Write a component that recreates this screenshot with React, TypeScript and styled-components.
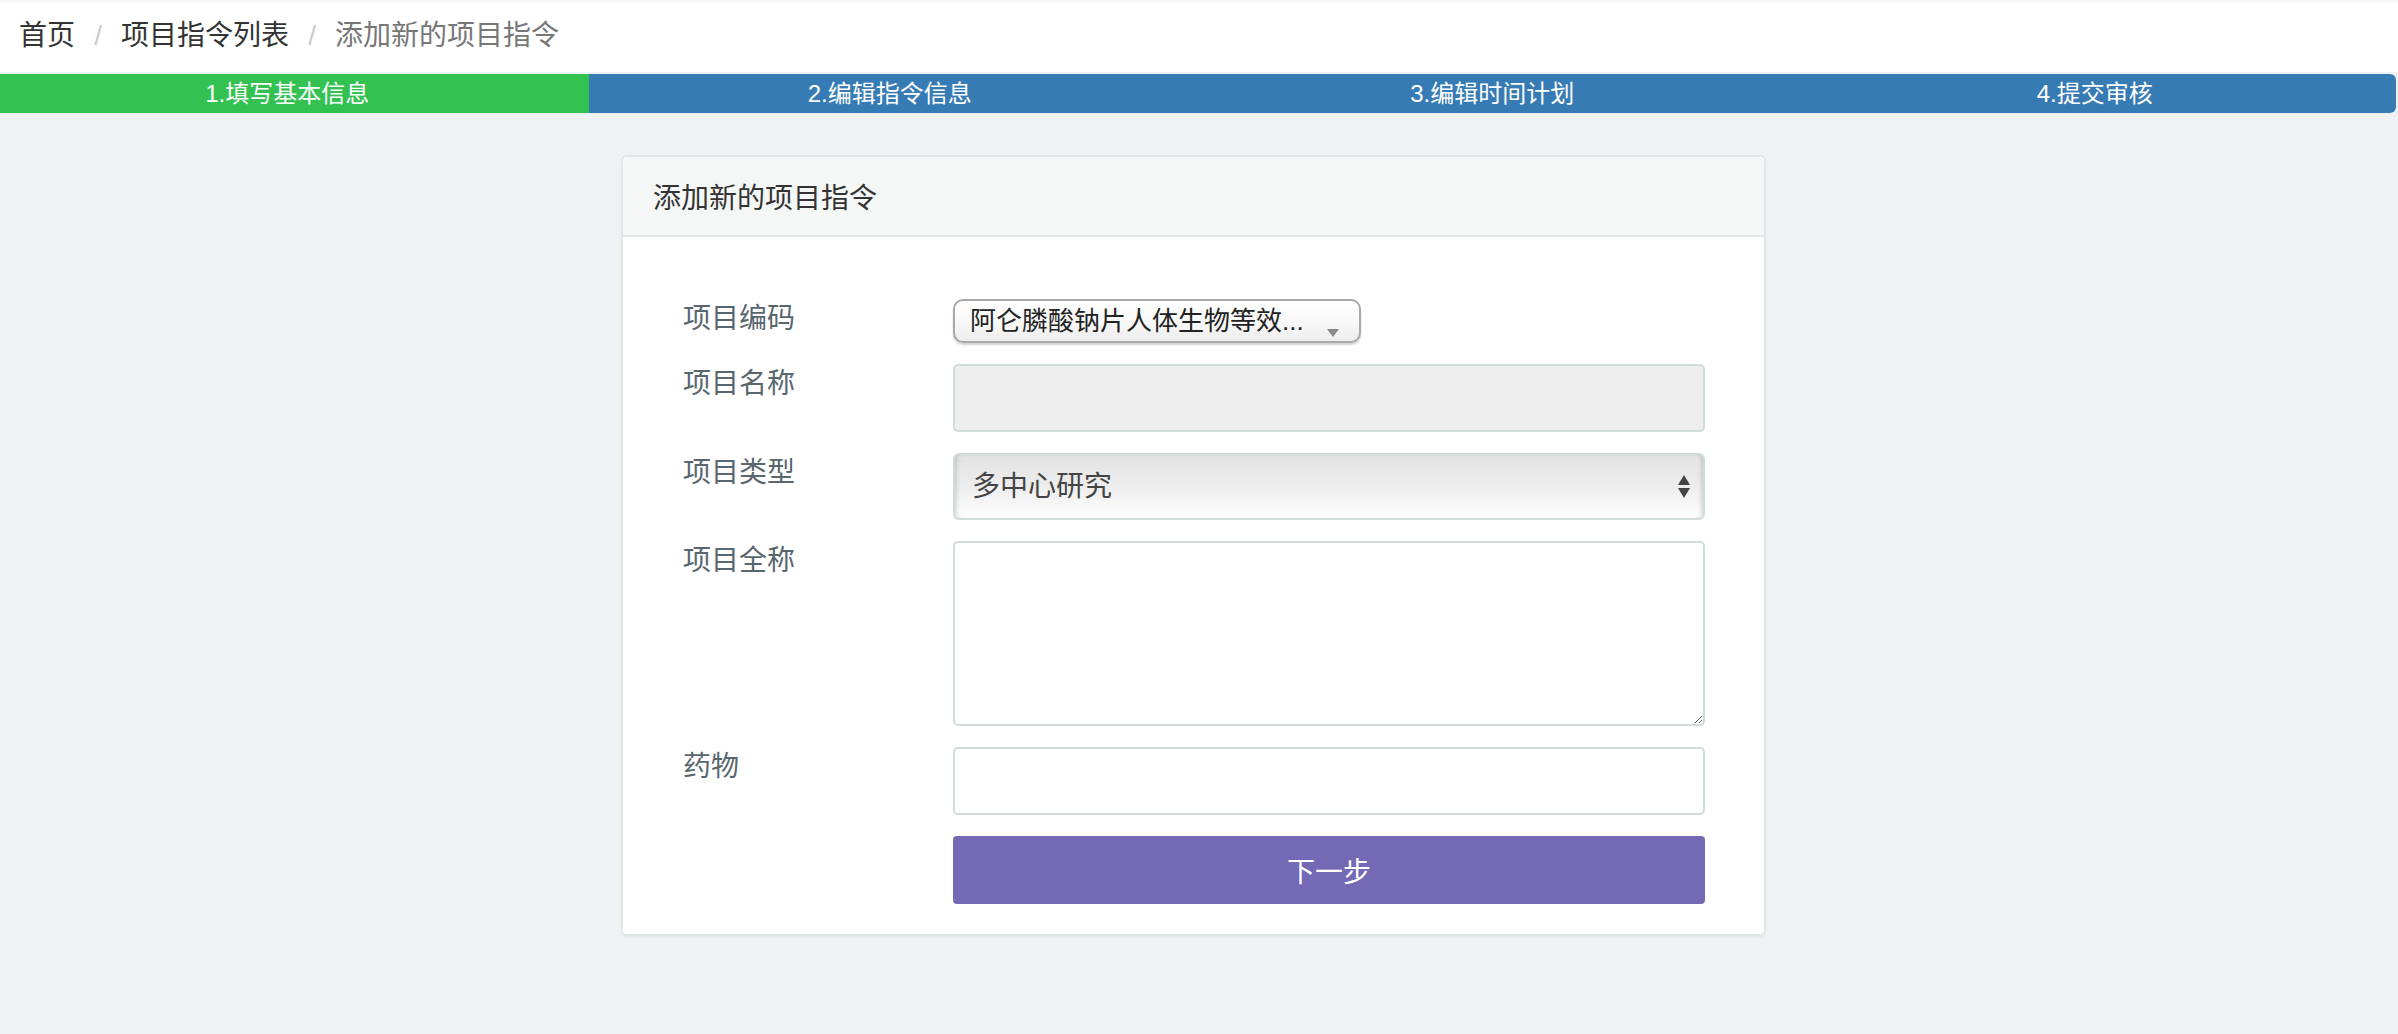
import { createGlobalStyle } from 'styled-components'
import styled from 'styled-components'

const GlobalStyle = createGlobalStyle`
  html, body {
    margin: 0;
    padding: 0;
    background: #eef2f3;
    font-family: "Liberation Sans", "Noto Sans CJK SC", sans-serif;
  }
  * {
    box-sizing: border-box;
  }
`

const Page = styled.div`
  width: 2398px;
  min-height: 1034px;
  background: #eef2f3;
  overflow: hidden;
`

const Breadcrumb = styled.nav`
  height: 72px;
  background: #fff;
  display: flex;
  align-items: center;
  padding-left: 19px;
  font-size: 28px;
  line-height: 40px;
  box-shadow: inset 0 5px 4px -3px rgba(0, 0, 0, 0.06);
`

const Crumb = styled.span<{ active?: boolean }>`
  color: ${props => props.active ? '#777' : '#333'};
`

const Sep = styled.span`
  display: inline-block;
  width: 46px;
  text-align: center;
  color: #ccc;
`

// the bar sits a little left of the page edge, as in the original
const StepBar = styled.div`
  margin: 2px 0 0 -14px;
  width: 2410px;
  height: 39px;
  display: grid;
  grid-template-columns: repeat(4, 1fr);
  border-radius: 0 6px 6px 0;
  overflow: hidden;
`

const Step = styled.div<{ done?: boolean }>`
  background: ${props => props.done ? '#33c152' : '#377bb5'};
  color: #fff;
  font-size: 24px;
  line-height: 39px;
  text-align: center;
`

const Panel = styled.section`
  margin: 42px 0 0 621px;
  width: 1145px;
  background: #fff;
  border: 2px solid #e1e7e7;
  border-radius: 6px;
  box-shadow: 0 2px 2px rgba(0, 0, 0, 0.04);
`

const PanelHeader = styled.div`
  height: 80px;
  display: flex;
  align-items: center;
  padding: 0 30px;
  background: #f5f7f7;
  border-bottom: 2px solid #e3e8e8;
  border-radius: 6px 6px 0 0;
  font-size: 28px;
  color: #333;
`

const PanelBody = styled.div`
  padding: 62px 59px 30px 60px;
  display: flex;
  flex-direction: column;
  gap: 21px;
`

const Row = styled.div`
  display: grid;
  grid-template-columns: 270px 1fr;
  align-items: start;
`

const Label = styled.label`
  font-size: 28px;
  line-height: 40px;
  color: #58666e;
`

const MiniSelect = styled.div`
  position: relative;
  width: 408px;
  height: 44px;
  border: 2px solid #a9a9a9;
  border-radius: 10px;
  background: linear-gradient(to bottom, #ffffff 0%, #f7f7f7 60%, #ececec 100%);
  box-shadow: 0 2px 2px rgba(0, 0, 0, 0.18);
  font-size: 26px;
  line-height: 40px;
  color: #222;
  padding-left: 15px;
  white-space: nowrap;
`

const SmallCaret = styled.span`
  position: absolute;
  right: 20px;
  top: 28px;
  width: 0;
  height: 0;
  border-left: 6px solid transparent;
  border-right: 6px solid transparent;
  border-top: 8px solid #8a8a8a;
`

const TextInput = styled.input`
  display: block;
  width: 100%;
  height: 68px;
  border: 2px solid #d0dbdc;
  border-radius: 5px;
  background: ${props => props.disabled ? '#eeeeee' : '#fff'};
  font-size: 28px;
  padding: 0 22px;
  outline: none;
`

const BigSelect = styled.div`
  position: relative;
  height: 67px;
  border: 2px solid #d0dbdc;
  border-radius: 6px;
  background: linear-gradient(to bottom, #e3e3e3 0%, #ececec 45%, #f8f8f8 85%, #ffffff 100%);
  box-shadow: inset 4px 0 5px -3px rgba(0, 0, 0, 0.18), inset -4px 0 5px -3px rgba(0, 0, 0, 0.18);
  font-size: 28px;
  line-height: 63px;
  color: #444;
  padding-left: 17px;
`

const UpDown = styled.span`
  position: absolute;
  right: 13px;
  top: 20px;
  display: flex;
  flex-direction: column;
  gap: 3px;

  &::before, &::after {
    content: '';
    width: 0;
    height: 0;
    border-left: 6px solid transparent;
    border-right: 6px solid transparent;
  }
  &::before {
    border-bottom: 10px solid #444;
  }
  &::after {
    border-top: 10px solid #444;
  }
`

const TextArea = styled.textarea`
  display: block;
  width: 100%;
  height: 185px;
  border: 2px solid #d0dbdc;
  border-radius: 5px;
  background: #fff;
  font-size: 28px;
  padding: 12px 22px;
  outline: none;
  resize: vertical;
`

const NextButton = styled.button`
  width: 100%;
  height: 68px;
  border: none;
  border-radius: 4px;
  background: #7369b5;
  color: #fff;
  font-family: "Liberation Sans", "Noto Sans CJK SC", sans-serif;
  font-size: 28px;
  cursor: pointer;
`

export default function App() {
  return (
    <Page>
      <GlobalStyle />
      <Breadcrumb>
        <Crumb>首页</Crumb>
        <Sep>/</Sep>
        <Crumb>项目指令列表</Crumb>
        <Sep>/</Sep>
        <Crumb active>添加新的项目指令</Crumb>
      </Breadcrumb>
      <StepBar>
        <Step done>1.填写基本信息</Step>
        <Step>2.编辑指令信息</Step>
        <Step>3.编辑时间计划</Step>
        <Step>4.提交审核</Step>
      </StepBar>
      <Panel>
        <PanelHeader>添加新的项目指令</PanelHeader>
        <PanelBody>
          <Row>
            <Label>项目编码</Label>
            <MiniSelect>
              阿仑膦酸钠片人体生物等效...
              <SmallCaret />
            </MiniSelect>
          </Row>
          <Row>
            <Label>项目名称</Label>
            <TextInput disabled />
          </Row>
          <Row>
            <Label>项目类型</Label>
            <BigSelect>
              多中心研究
              <UpDown />
            </BigSelect>
          </Row>
          <Row>
            <Label>项目全称</Label>
            <TextArea />
          </Row>
          <Row>
            <Label>药物</Label>
            <TextInput />
          </Row>
          <Row>
            <span />
            <NextButton>下一步</NextButton>
          </Row>
        </PanelBody>
      </Panel>
    </Page>
  )
}
